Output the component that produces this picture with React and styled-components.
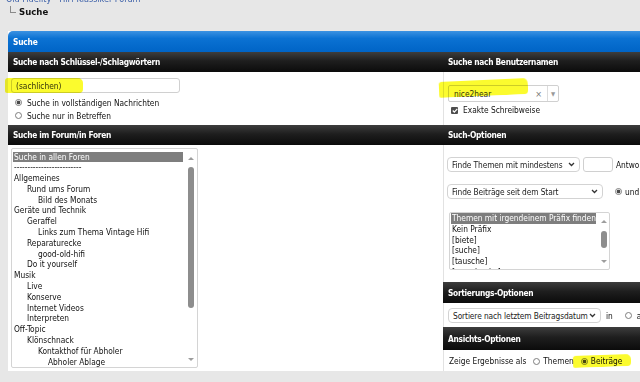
import styled, { createGlobalStyle } from 'styled-components';

const GlobalStyle = createGlobalStyle`
  html, body {
    margin: 0;
    padding: 0;
  }
  body {
    width: 640px;
    height: 382px;
    overflow: hidden;
    background: #e7e7e7;
    font-family: 'DejaVu Sans Condensed', 'Liberation Sans', sans-serif;
    font-size: 8.3px;
    color: #111;
  }
`;

const Page = styled.div`
  width: 640px;
  height: 382px;
  overflow: hidden;
`;

const Crumbs = styled.div`
  height: 31px;
  padding-left: 6px;
  display: flex;
  flex-direction: column;
`;

const CrumbLink = styled.div`
  margin-top: -6px;
  height: 11px;
  line-height: 11px;
  font-size: 9px;
  color: #3b5fa8;
  white-space: nowrap;
`;

const CrumbHere = styled.div`
  display: flex;
  align-items: flex-start;
  gap: 3px;
  padding-left: 4px;
`;

const TreeMark = styled.span`
  width: 5px;
  height: 6px;
  margin-top: 1px;
  border-left: 1px solid #8a8a8a;
  border-bottom: 1px solid #8a8a8a;
`;

const CrumbTitle = styled.span`
  font-weight: bold;
  font-size: 9.5px;
  line-height: 12px;
  margin-top: 1px;
`;

const Panel = styled.div`
  margin-left: 8px;
  width: 760px;
  background: #fff;
`;

const PanelTitle = styled.div`
  height: 21px;
  padding-left: 5px;
  display: flex;
  align-items: center;
  border-radius: 5px 5px 0 0;
  background: linear-gradient(#3b92e2 0%, #0b72d3 35%, #0064c6 100%);
  color: #fff;
  font-weight: bold;
  letter-spacing: -0.2px;
`;

const Grid = styled.div`
  display: grid;
  grid-template-columns: 435px 1fr;
`;

const Head = styled.div`
  height: ${p => p.h || 20}px;
  padding-left: 5px;
  display: flex;
  align-items: center;
  background: linear-gradient(#3d3d3d 0%, #1e1e1e 45%, #0b0b0b 100%);
  color: #fff;
  font-weight: bold;
  letter-spacing: -0.3px;
  white-space: nowrap;
`;

const Cell = styled.div`
  position: relative;
  box-sizing: border-box;
  height: ${p => p.h}px;
  padding: ${p => p.pad || '0'};
  border-left: ${p => (p.divider ? '1px solid #e2e2e2' : 'none')};
`;

const Stack = styled.div`
  display: flex;
  flex-direction: column;
`;

const Row = styled.div`
  display: flex;
  align-items: center;
  gap: ${p => p.gap || 0}px;
  height: ${p => p.h || 13}px;
  margin-top: ${p => p.mt || 0}px;
  margin-left: ${p => p.ml || 0}px;
  white-space: nowrap;
`;

const TextInput = styled.div`
  box-sizing: border-box;
  width: ${p => p.width}px;
  height: ${p => p.h || 15}px;
  flex: none;
  border: 1px solid #d0d0d0;
  border-radius: 3px;
  background: #fff;
  display: flex;
  align-items: center;
  padding-left: 4px;
  color: #333;
`;

const Combo = styled(TextInput)`
  padding-left: 5px;
  justify-content: space-between;
  padding-right: 0;
  border-radius: 2px;
`;

const ComboClear = styled.span`
  margin-left: auto;
  margin-right: 5px;
  color: #777;
  font-size: 9px;
`;

const ComboToggle = styled.span`
  width: 10px;
  height: 100%;
  border-left: 1px solid #dcdcdc;
  display: flex;
  align-items: center;
  justify-content: center;
  color: #999;
  font-size: 6px;
`;

const Select = styled.div`
  box-sizing: border-box;
  width: ${p => p.width}px;
  height: 15px;
  flex: none;
  border: 1px solid #d3d3d3;
  border-radius: 4px;
  background: #fff;
  display: flex;
  align-items: center;
  justify-content: space-between;
  padding: 0 4px 0 4px;
  color: #222;
  letter-spacing: -0.1px;
`;

const Radio = styled.span`
  flex: none;
  box-sizing: border-box;
  width: 7px;
  height: 7px;
  margin-left: ${p => p.ml || 0}px;
  margin-right: ${p => p.mr || 0}px;
  border: 1px solid #7d7d7d;
  border-radius: 50%;
  background: ${p =>
    p.checked
      ? 'radial-gradient(circle, #4a4a4a 0 1.5px, #fff 2.2px)'
      : '#fff'};
`;

const Check = styled.span`
  flex: none;
  width: 7px;
  height: 7px;
  background: #4d4d4d;
  border-radius: 1px;
  display: flex;
  align-items: center;
  justify-content: center;
`;

const ListBox = styled.div`
  display: flex;
  box-sizing: border-box;
  width: ${p => p.width}px;
  height: ${p => p.height}px;
  margin-left: ${p => p.ml || 0}px;
  margin-top: ${p => p.mt || 0}px;
  border: 1px solid #d4d4d4;
  border-radius: 2px;
  background: #fff;
  overflow: hidden;
`;

const Options = styled.div`
  flex: 1;
  min-width: 0;
  padding: ${p => p.pad};
  overflow: hidden;
`;

const INDENT = [1, 14, 25, 35];

const Option = styled.div`
  height: 10.8px;
  line-height: 10.8px;
  padding-left: ${p => INDENT[p.level || 0]}px;
  white-space: nowrap;
  background: ${p => (p.selected ? '#7e7e7e' : 'transparent')};
  color: ${p => (p.selected ? '#fff' : '#111')};
`;

const Scrollbar = styled.div`
  flex: none;
  width: ${p => p.width}px;
  display: flex;
  flex-direction: column;
  align-items: center;
  padding-top: ${p => p.top}px;
  padding-bottom: 6px;
  box-sizing: border-box;
`;

const ArrowUp = styled.div`
  width: 0;
  height: 0;
  border-left: 3px solid transparent;
  border-right: 3px solid transparent;
  border-bottom: 3px solid #9d9d9d;
`;

const ArrowDown = styled.div`
  margin-top: auto;
  width: 0;
  height: 0;
  border-left: 3px solid transparent;
  border-right: 3px solid transparent;
  border-top: 3px solid #9d9d9d;
`;

const Thumb = styled.div`
  width: 6px;
  height: ${p => p.size}px;
  margin-top: ${p => p.offset}px;
  border-radius: 3px;
  background: #8d8d8d;
`;

const Marker = styled.span`
  position: absolute;
  left: ${p => p.x}px;
  top: ${p => p.y}px;
  width: ${p => p.w}px;
  height: ${p => p.h}px;
  background: #fbfb2e;
  border-radius: 3px 5px 4px 2px;
  mix-blend-mode: multiply;
  transform: rotate(${p => p.tilt || 0}deg);
  pointer-events: none;
`;

const Chevron = () => (
  <svg width="7" height="5" viewBox="0 0 7 5">
    <path d="M1 1l2.5 2.5L6 1" stroke="#333" strokeWidth="1.3" fill="none" />
  </svg>
);

const Tick = () => (
  <svg width="6" height="5" viewBox="0 0 6 5">
    <path d="M0.8 2.5l1.5 1.6L5.3 0.8" stroke="#fff" strokeWidth="1.2" fill="none" />
  </svg>
);

const forums = [
  ['Suche in allen Foren', 0, true],
  ['-------------------------', 0],
  ['Allgemeines', 0],
  ['Rund ums Forum', 1],
  ['Bild des Monats', 2],
  ['Geräte und Technik', 0],
  ['Geraffel', 1],
  ['Links zum Thema Vintage Hifi', 2],
  ['Reparaturecke', 1],
  ['good-old-hifi', 2],
  ['Do it yourself', 1],
  ['Musik', 0],
  ['Live', 1],
  ['Konserve', 1],
  ['Internet Videos', 1],
  ['Interpreten', 1],
  ['Off-Topic', 0],
  ['Klönschnack', 1],
  ['Kontakthof für Abholer', 2],
  ['Abholer Ablage', 3],
];

const prefixes = [
  ['Themen mit irgendeinem Präfix finden', true],
  ['Kein Präfix'],
  ['[biete]'],
  ['[suche]'],
  ['[tausche]'],
  ['[verschenke]'],
];

const App = () => (
  <Page>
    <GlobalStyle />
    <Crumbs>
      <CrumbLink>Old Fidelity - HiFi Klassiker Forum</CrumbLink>
      <CrumbHere>
        <TreeMark />
        <CrumbTitle>Suche</CrumbTitle>
      </CrumbHere>
    </Crumbs>

    <Panel>
      <PanelTitle>Suche</PanelTitle>
      <Grid>
        <Head>Suche nach Schlüssel-/Schlagwörtern</Head>
        <Head>Suche nach Benutzernamen</Head>

        <Cell h={53} pad='6px 0 0 3px'>
          <Marker x={-3} y={6} w={78} h={15} />
          <TextInput width={169}>(sachlichen)</TextInput>
          <Row mt={3} ml={4} gap={5}>
            <Radio checked />
            Suche in vollständigen Nachrichten
          </Row>
          <Row ml={4} gap={5}>
            <Radio />
            Suche nur in Betreffen
          </Row>
        </Cell>
        <Cell h={53} pad='13px 0 0 4px' divider>
          <Combo width={111} h={17}>
            nice2hear
            <ComboClear>×</ComboClear>
            <ComboToggle>▼</ComboToggle>
          </Combo>
          <Marker x={-5} y={8} w={89} h={16} tilt={-2.5} />
          <Row mt={2} ml={3} gap={5} h={12}>
            <Check>
              <Tick />
            </Check>
            Exakte Schreibweise
          </Row>
        </Cell>

        <Head>Suche im Forum/in Foren</Head>
        <Head>Such-Optionen</Head>

        <Cell h={226} pad='3px 0 0 3px'>
          <ListBox width={187} height={220}>
            <Options pad='2.5px 2px 0 1px'>
              {forums.map(([label, level, selected]) => (
                <Option key={label} level={level} selected={selected}>
                  {label}
                </Option>
              ))}
            </Options>
            <Scrollbar width={12} top={8}>
              <ArrowUp />
              <Thumb offset={7} size={141} />
              <ArrowDown />
            </Scrollbar>
          </ListBox>
        </Cell>

        <Stack>
          <Cell h={137} pad='12px 0 0 3px' divider>
            <Row h={15} gap={3}>
              <Select width={133}>
                Finde Themen mit mindestens
                <Chevron />
              </Select>
              <TextInput width={30} />
              Antworten
            </Row>
            <Row h={15} mt={12} gap={0}>
              <Select width={156}>
                Finde Beiträge seit dem Start
                <Chevron />
              </Select>
              <Radio checked ml={12} mr={3} />
              und neuer
            </Row>
            <ListBox width={161} height={58} ml={2} mt={13}>
              <Options pad='0 2px 0 1px'>
                {prefixes.map(([label, selected]) => (
                  <Option key={label} selected={selected}>
                    {label}
                  </Option>
                ))}
              </Options>
              <Scrollbar width={11} top={7}>
                <ArrowUp />
                <Thumb offset={8} size={17} />
                <ArrowDown />
              </Scrollbar>
            </ListBox>
          </Cell>
          <Head h={21}>Sortierungs-Optionen</Head>
          <Cell h={24} pad='5px 0 0 4px' divider>
            <Row h={15} gap={5}>
              <Select width={153}>
                Sortiere nach letztem Beitragsdatum
                <Chevron />
              </Select>
              in
              <Radio ml={7} />
              aufsteigend
            </Row>
          </Cell>
          <Head h={23}>Ansichts-Optionen</Head>
          <Cell h={21} pad='4px 0 0 5px' divider>
            <Marker x={129} y={5} w={58} h={12} tilt={-2} />
            <Row h={14} gap={3}>
              Zeige Ergebnisse als
              <Radio ml={4} />
              Themen
              <Radio checked ml={4} />
              Beiträge
            </Row>
          </Cell>
        </Stack>
      </Grid>
    </Panel>
  </Page>
);

export default App;
